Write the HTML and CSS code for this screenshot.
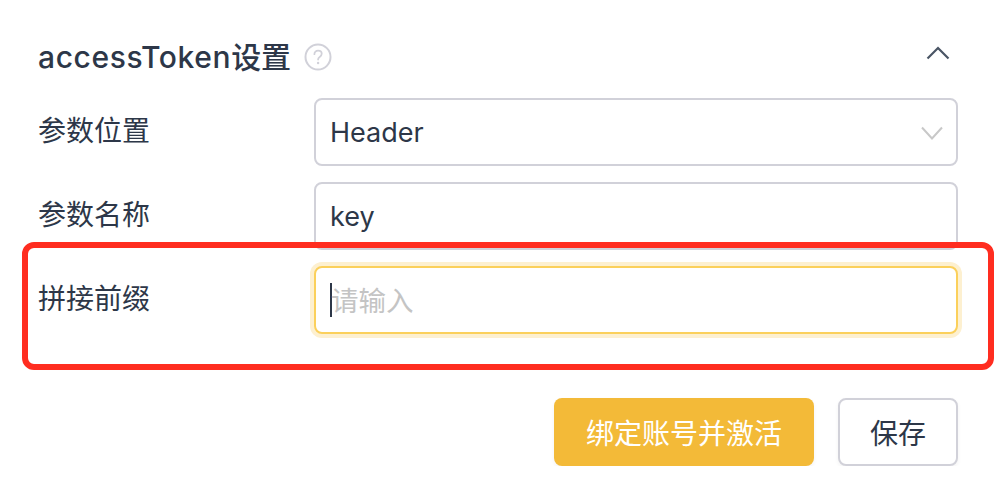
FILE: index.html
```html
<!DOCTYPE html>
<html lang="en">
<head>
    <meta charset="UTF-8">
    <meta name="viewport" content="width=device-width, initial-scale=1.0">
    <title>accessToken设置</title>
    <link rel="stylesheet" href="styles.css">
</head>
<body>
    <div class="panel">
        <div class="panel-head">
            <h2>accessToken<span class="cjk">设置</span></h2>
            <svg class="help-icon" width="28" height="28" viewBox="0 0 28 28" fill="none">
                <circle cx="14" cy="14" r="12.5" stroke="#d1d1d9" stroke-width="2"/>
                <path d="M10.4 11.2c0-2.2 1.6-3.6 3.7-3.6s3.6 1.3 3.6 3.2c0 1.5-.8 2.3-2 3.1-1.100.7-1.600 1.300-1.600 2.600" stroke="#d1d1d9" stroke-width="1.800" stroke-linecap="round"/>
                <circle cx="14.100" cy="20" r="1.200" fill="#d1d1d9"/>
            </svg>
            <svg class="collapse-icon" width="24" height="14" viewBox="0 0 24 14" fill="none">
                <path d="M1.500 12.500 12 2l10.500 10.500" stroke="#4a5565" stroke-width="2.200"/>
            </svg>
        </div>

        <div class="form-row">
            <label>参数位置</label>
            <div class="field">
                Header
                <svg class="select-arrow" width="22" height="14" viewBox="0 0 22 14" fill="none">
                    <path d="M1 1.500 11 12.500 21 1.500" stroke="#c8c8c8" stroke-width="2"/>
                </svg>
            </div>
        </div>

        <div class="form-row">
            <label>参数名称</label>
            <div class="field">key</div>
        </div>

        <div class="form-row highlighted">
            <label>拼接前缀</label>
            <div class="field focused"><span class="caret"></span><span class="placeholder">请输入</span></div>
            <div class="red-box"></div>
        </div>

        <div class="actions">
            <button type="button" class="btn btn-primary">绑定账号并激活</button>
            <button type="button" class="btn">保存</button>
        </div>
    </div>
</body>
</html>
```

FILE: styles.css
```css
body {
    margin: 0;
    background-color: #fff;
    font-family: Inter, "Noto Sans CJK SC", sans-serif;
    color: #2d3748;
}
.panel {
    width: 920px;
    padding: 38px 38px 0;
}
.panel-head {
    display: flex;
    align-items: center;
    height: 38px;
    margin-bottom: 22px;
}
h2 {
    margin: 0;
    font-size: 30px;
    font-weight: 500;
    line-height: 38px;
    letter-spacing: 0.6px;
}
h2 .cjk {
    letter-spacing: 0;
}
.help-icon {
    margin-left: 13px;
}
.collapse-icon {
    margin-left: auto;
    margin-right: 8px;
    margin-top: -8px;
}
.form-row {
    display: flex;
    position: relative;
    margin-bottom: 16px;
}
label {
    width: 276px;
    flex: none;
    font-size: 28px;
    line-height: 66px;
}
.field {
    display: flex;
    align-items: center;
    position: relative;
    flex: 1;
    height: 68px;
    padding: 0 14px;
    border: 2px solid #d1d1d9;
    border-radius: 8px;
    box-sizing: border-box;
    font-size: 27px;
    background-color: #fff;
}
.select-arrow {
    position: absolute;
    right: 13px;
    top: 26px;
}
.field.focused {
    border-color: #fbd05b;
    box-shadow: 0 0 0 4px #fdf0d0;
}
.caret {
    width: 2px;
    height: 34px;
    margin-right: -1px;
    background-color: #2d3748;
}
.placeholder {
    margin-top: -3px;
    color: #c4c4c4;
    font-size: 27.500px;
}
.red-box {
    position: absolute;
    left: -16px;
    right: -36px;
    top: -24px;
    bottom: -36px;
    border: 6px solid #ff2d20;
    border-radius: 12px;
}
.actions {
    display: flex;
    justify-content: flex-end;
    gap: 24px;
    margin-top: 64px;
}
.btn {
    height: 68px;
    width: 120px;
    padding: 0;
    border: 2px solid #d1d1d9;
    border-radius: 8px;
    background-color: #fff;
    color: #2d3748;
    font-family: inherit;
    font-size: 28px;
    box-shadow: 0 2px 4px rgba(0,0,0,0.05);
}
.btn-primary {
    width: 260px;
    border: none;
    background-color: #f3ba38;
    color: #fff;
}
```
